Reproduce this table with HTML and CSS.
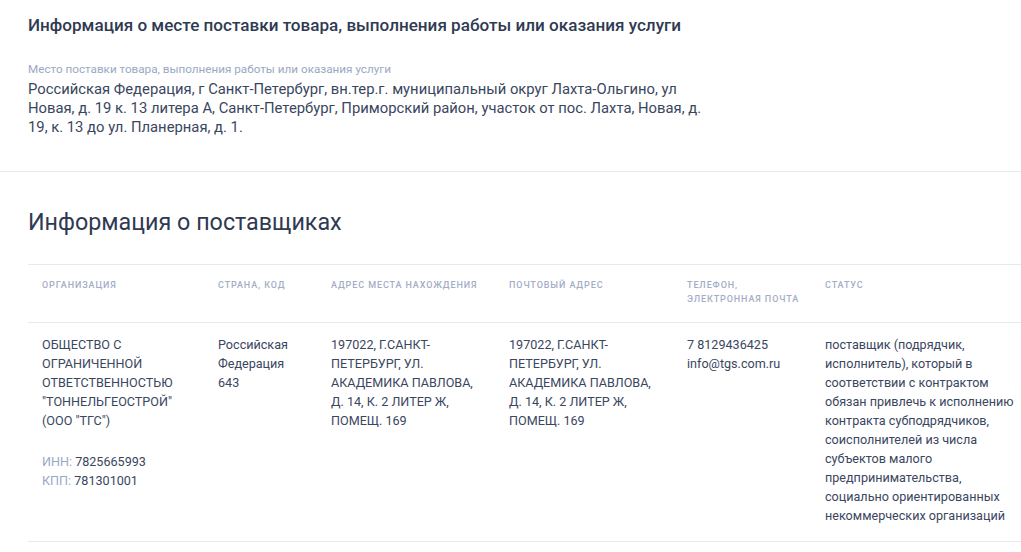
FILE: index.html
```html
<!DOCTYPE html>
<html lang="ru">
<head>
<meta charset="utf-8">
<link rel="stylesheet" href="styles.css">
</head>
<body>
<section class="place">
  <h2 class="place-title">Информация о месте поставки товара, выполнения работы или оказания услуги</h2>
  <div class="field">
    <div class="field-label">Место поставки товара, выполнения работы или оказания услуги</div>
    <div class="field-value">Российская Федерация, г Санкт-Петербург, вн.тер.г. муниципальный округ Лахта-Ольгино, ул Новая, д. 19 к. 13 литера А, Санкт-Петербург, Приморский район, участок от пос. Лахта, Новая, д. 19, к. 13 до ул. Планерная, д. 1.</div>
  </div>
</section>
<section class="suppliers">
  <h2 class="suppliers-title">Информация о поставщиках</h2>
  <table class="table">
    <colgroup>
      <col class="c1"><col class="c2"><col class="c3"><col class="c4"><col class="c5"><col class="c6">
    </colgroup>
    <thead>
      <tr>
        <th>Организация</th>
        <th>Страна, код</th>
        <th>Адрес места нахождения</th>
        <th>Почтовый адрес</th>
        <th>Телефон,<br>электронная почта</th>
        <th>Статус</th>
      </tr>
    </thead>
    <tbody>
      <tr>
        <td>ОБЩЕСТВО С ОГРАНИЧЕННОЙ ОТВЕТСТВЕННОСТЬЮ "ТОННЕЛЬГЕОСТРОЙ" (ООО "ТГС")
          <div class="ids"><span class="muted">ИНН:</span> 7825665993<br><span class="muted">КПП:</span> 781301001</div>
        </td>
        <td>Российская Федерация<br>643</td>
        <td>197022, Г.САНКТ-ПЕТЕРБУРГ, УЛ. АКАДЕМИКА ПАВЛОВА, Д. 14, К. 2 ЛИТЕР Ж, ПОМЕЩ. 169</td>
        <td>197022, Г.САНКТ-ПЕТЕРБУРГ, УЛ. АКАДЕМИКА ПАВЛОВА, Д. 14, К. 2 ЛИТЕР Ж, ПОМЕЩ. 169</td>
        <td>7 8129436425<br>info@tgs.com.ru</td>
        <td>поставщик (подрядчик, исполнитель), который в соответствии с контрактом обязан привлечь к исполнению контракта субподрядчиков, соисполнителей из числа субъектов малого предпринимательства, социально ориентированных некоммерческих организаций</td>
      </tr>
    </tbody>
  </table>
</section>
</body>
</html>
```

FILE: styles.css
```css
html, body {
  margin: 0;
  padding: 0;
  background: #ffffff;
}
body {
  font-family: Roboto, "Liberation Sans", sans-serif;
  color: #334059;
  overflow: hidden;
}
.place {
  padding: 14px 28px 34px;
  border-bottom: 1px solid #e6e8f2;
}
.place-title {
  margin: 0;
  font-size: 17.1px;
  font-weight: 500;
  line-height: 22px;
  color: #2f3a52;
}
.field {
  margin-top: 26px;
  max-width: 690px;
}
.field-label {
  font-size: 11.7px;
  line-height: 14px;
  color: #9aa8c4;
}
.field-value {
  margin-top: 4px;
  font-size: 14.8px;
  line-height: 19px;
  color: #3a4660;
}
.suppliers {
  padding: 0 0 0 28px;
}
.suppliers-title {
  margin: 35px 0 0;
  font-size: 23.3px;
  font-weight: 400;
  line-height: 30px;
  color: #2f3a52;
}
.table {
  margin-top: 27px;
  width: 1010px;
  border-collapse: collapse;
  table-layout: fixed;
}
.c1 { width: 176px; }
.c2 { width: 113px; }
.c3 { width: 178px; }
.c4 { width: 178px; }
.c5 { width: 138px; }
.c6 { width: 227px; }
.table th {
  text-align: left;
  vertical-align: top;
  padding: 13px 6px 16px 14px;
  font-size: 9px;
  line-height: 14px;
  font-weight: 500;
  letter-spacing: 0.9px;
  text-transform: uppercase;
  white-space: nowrap;
  color: #a3adc6;
  border-top: 1px solid #e6e8f2;
  border-bottom: 1px solid #e6e8f2;
}
.table td {
  vertical-align: top;
  padding: 12px 14px 16px;
  font-size: 12.6px;
  line-height: 19px;
  color: #3a4660;
  border-bottom: 1px solid #e8e9ef;
}
.ids {
  margin-top: 22px;
}
.muted {
  color: #9aa8c4;
}
```
